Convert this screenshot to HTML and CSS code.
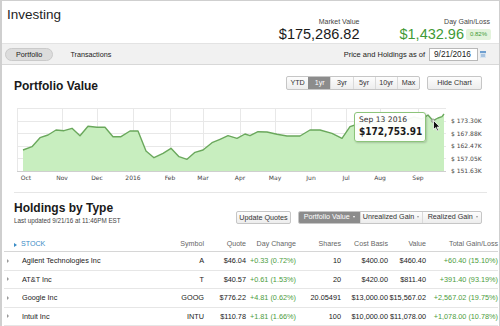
FILE: index.html
```html
<!DOCTYPE html>
<html lang="en">
<head>
<meta charset="utf-8">
<title>Investing</title>
<link rel="stylesheet" href="styles.css">
</head>
<body>
<div class="frame">
  <header class="top">
    <h1 class="title">Investing</h1>
    <div class="stats">
      <div class="stat">
        <div class="stat-label">Market Value</div>
        <div class="stat-value">$175,286.82</div>
      </div>
      <div class="stat">
        <div class="stat-label">Day Gain/Loss</div>
        <div class="stat-row"><span class="stat-value gain">$1,432.96</span><span class="badge">0.82%</span></div>
      </div>
    </div>
  </header>

  <nav class="tabs">
    <div class="tab-list"><span class="tab active">Portfolio</span><span class="tab">Transactions</span></div>
    <div class="asof">
      <span class="asof-label">Price and Holdings as of</span>
      <span class="date-box">9/21/2016</span>
      <svg class="cal" width="6" height="7" viewBox="0 0 6 7"><rect x="0" y="0" width="6" height="7" fill="#d8e4f0"/><rect x="0" y="0" width="6" height="2" fill="#6f9fd0"/><rect x="1" y="3" width="4" height="3" fill="#a9c4e0"/></svg>
    </div>
  </nav>

  <div class="pv-head">
    <h2 class="section-title pv-title">Portfolio Value</h2>
    <div class="controls">
      <div class="seg">
        <button class="seg-btn">YTD</button><button class="seg-btn on">1yr</button><button class="seg-btn">3yr</button><button class="seg-btn">5yr</button><button class="seg-btn">10yr</button><button class="seg-btn">Max</button>
      </div>
      <button class="btn hide-btn">Hide Chart</button>
    </div>
  </div>

  <div class="chart">
    <svg class="plot" width="496" height="86" viewBox="2 100 496 86">
      <g class="grid">
        <line x1="17" y1="108.5" x2="446" y2="108.5"/>
        <line x1="17" y1="121" x2="446" y2="121"/>
        <line x1="17" y1="133.5" x2="446" y2="133.5"/>
        <line x1="17" y1="146" x2="446" y2="146"/>
        <line x1="17" y1="158.5" x2="446" y2="158.5"/>
        <line x1="17.5" y1="108" x2="17.5" y2="171"/>
        <line x1="62.5" y1="108" x2="62.5" y2="171"/>
        <line x1="97.5" y1="108" x2="97.5" y2="171"/>
        <line x1="133.5" y1="108" x2="133.5" y2="171"/>
        <line x1="170.5" y1="108" x2="170.5" y2="171"/>
        <line x1="203.5" y1="108" x2="203.5" y2="171"/>
        <line x1="240.5" y1="108" x2="240.5" y2="171"/>
        <line x1="275.5" y1="108" x2="275.5" y2="171"/>
        <line x1="311.5" y1="108" x2="311.5" y2="171"/>
        <line x1="346.5" y1="108" x2="346.5" y2="171"/>
        <line x1="380.5" y1="108" x2="380.5" y2="171"/>
        <line x1="418.5" y1="108" x2="418.5" y2="171"/>
      </g>
      <path class="area" d="M23,150 L32,146.7 L40,137.7 L48,135 L56,130 L64,130.7 L72,128.3 L80,135.7 L88,126.3 L97,127.3 L105,127.3 L113,136.7 L121,136.7 L130,131 L138,131 L146,151 L154,157.7 L163,153.3 L171,148.3 L179,156.7 L187,159.3 L195,152.3 L203,150 L212,142.7 L220,139.3 L228,135.7 L237,138.3 L245,134 L250,135.7 L258,131.7 L267,132 L277,134.3 L287,136 L300,136 L310,130 L320,130 L332,133.3 L342,138.3 L350,126.7 L358,124 L366,121 L374,123 L382,119 L390,121 L398,118 L406,120 L414,117 L422,119 L428,115 L433,120.7 L438,118 L442,116.7 L444,114 L444,171 L23,171 Z"/>
      <path class="line" d="M23,150 L32,146.7 L40,137.7 L48,135 L56,130 L64,130.7 L72,128.3 L80,135.7 L88,126.3 L97,127.3 L105,127.3 L113,136.7 L121,136.7 L130,131 L138,131 L146,151 L154,157.7 L163,153.3 L171,148.3 L179,156.7 L187,159.3 L195,152.3 L203,150 L212,142.7 L220,139.3 L228,135.7 L237,138.3 L245,134 L250,135.7 L258,131.7 L267,132 L277,134.3 L287,136 L300,136 L310,130 L320,130 L332,133.3 L342,138.3 L350,126.7 L358,124 L366,121 L374,123 L382,119 L390,121 L398,118 L406,120 L414,117 L422,119 L428,115 L433,120.7 L438,118 L442,116.7 L444,114"/>
      <line class="axis" x1="17" y1="171.5" x2="446" y2="171.5"/>
      <circle class="marker" cx="433" cy="120.7" r="1.8"/>
      <g class="xl">
        <text x="26" y="179.5">Oct</text>
        <text x="62" y="179.5">Nov</text>
        <text x="97" y="179.5">Dec</text>
        <text x="133" y="179.5">2016</text>
        <text x="170" y="179.5">Feb</text>
        <text x="203" y="179.5">Mar</text>
        <text x="240" y="179.5">Apr</text>
        <text x="275" y="179.5">May</text>
        <text x="311" y="179.5">Jun</text>
        <text x="346" y="179.5">Jul</text>
        <text x="380" y="179.5">Aug</text>
        <text x="418" y="179.5">Sep</text>
      </g>
      <g class="yl">
        <text x="451" y="123">$ 173.30K</text>
        <text x="451" y="135.5">$ 167.88K</text>
        <text x="451" y="148">$ 162.47K</text>
        <text x="451" y="160.5">$ 157.05K</text>
        <text x="451" y="173">$ 151.63K</text>
      </g>
    </svg>
    <div class="tooltip">
      <div class="tt-date">Sep 13 2016</div>
      <div class="tt-value">$172,753.91</div>
    </div>
    <svg class="cursor" width="8" height="12" viewBox="0 0 8 12"><path d="M0.5,0.5 L0.5,9.5 L2.6,7.6 L4.1,10.9 L5.5,10.3 L4,7.1 L6.9,7 Z" fill="#111" stroke="#fff" stroke-width="0.8"/></svg>
  </div>

  <div class="holdings-head">
    <div class="hh-left">
      <h2 class="section-title">Holdings by Type</h2>
      <div class="updated">Last updated 9/21/16 at 11:46PM EST</div>
    </div>
    <div class="hh-right">
      <button class="btn update-btn">Update Quotes</button>
      <div class="seg dd">
        <button class="seg-btn on dd1">Portfolio Value<i class="caret"></i></button><button class="seg-btn dd2">Unrealized Gain<i class="caret"></i></button><button class="seg-btn dd3">Realized Gain<i class="caret"></i></button>
      </div>
    </div>
  </div>

  <div class="table">
    <div class="tr th">
      <div class="c name stock"><i class="tri blue"></i>STOCK</div>
      <div class="c">Symbol</div>
      <div class="c">Quote</div>
      <div class="c">Day Change</div>
      <div class="c">Shares</div>
      <div class="c">Cost Basis</div>
      <div class="c">Value</div>
      <div class="c">Total Gain/Loss</div>
    </div>
    <div class="tr">
      <div class="c name"><i class="tri"></i>Agilent Technologies Inc</div>
      <div class="c">A</div>
      <div class="c">$46.04</div>
      <div class="c pos">+0.33 (0.72%)</div>
      <div class="c">10</div>
      <div class="c">$400.00</div>
      <div class="c">$460.40</div>
      <div class="c pos">+60.40 (15.10%)</div>
    </div>
    <div class="tr">
      <div class="c name"><i class="tri"></i>AT&amp;T Inc</div>
      <div class="c">T</div>
      <div class="c">$40.57</div>
      <div class="c pos">+0.61 (1.53%)</div>
      <div class="c">20</div>
      <div class="c">$420.00</div>
      <div class="c">$811.40</div>
      <div class="c pos">+391.40 (93.19%)</div>
    </div>
    <div class="tr">
      <div class="c name"><i class="tri"></i>Google Inc</div>
      <div class="c">GOOG</div>
      <div class="c">$776.22</div>
      <div class="c pos">+4.81 (0.62%)</div>
      <div class="c">20.05491</div>
      <div class="c">$13,000.00</div>
      <div class="c">$15,567.02</div>
      <div class="c pos">+2,567.02 (19.75%)</div>
    </div>
    <div class="tr">
      <div class="c name"><i class="tri"></i>Intuit Inc</div>
      <div class="c">INTU</div>
      <div class="c">$110.78</div>
      <div class="c pos">+1.81 (1.66%)</div>
      <div class="c">100</div>
      <div class="c">$10,000.00</div>
      <div class="c">$11,078.00</div>
      <div class="c pos">+1,078.00 (10.78%)</div>
    </div>
  </div>
</div>
</body>
</html>
```

FILE: styles.css
```css
* {
  box-sizing: border-box;
  margin: 0;
  padding: 0;
}

html, body {
  width: 500px;
  height: 326px;
  overflow: hidden;
  background: #fff;
}

body {
  font-family: "Liberation Sans", Arial, sans-serif;
  color: #222;
}

button {
  font: inherit;
  color: inherit;
  background: none;
  border: 0;
  cursor: default;
}

.frame {
  height: 326px;
  border: 1px solid #cfcfcf;
  border-left-width: 2px;
  border-bottom: 0;
}

/* header */
.top {
  display: flex;
  justify-content: space-between;
  align-items: flex-start;
  height: 42px;
  padding: 6px 9px 0 5px;
}

.title {
  font-size: 13.5px;
  font-weight: normal;
  line-height: 16px;
  color: #1e1e1e;
}

.stats {
  display: flex;
  gap: 40px;
  padding-top: 10px;
}

.stat {
  display: flex;
  flex-direction: column;
  align-items: flex-end;
}

.stat-label {
  font-size: 7px;
  line-height: 9px;
  color: #444;
}

.stat-value {
  font-size: 14.5px;
  line-height: 16px;
  color: #1a1a1a;
}

.stat-row {
  display: flex;
  align-items: center;
  gap: 2px;
}

.gain {
  color: #3f9a36;
}

.badge {
  font-size: 6px;
  line-height: 7px;
  padding: 2px 4px;
  background: #e3f3dc;
  color: #3f9a36;
  border-radius: 2px;
  margin-right: -1px;
}

/* tabs bar */
.tabs {
  display: flex;
  justify-content: space-between;
  align-items: center;
  height: 22px;
  background: #f1f1f1;
  border-top: 1px solid #e3e3e3;
  border-bottom: 1px solid #d8d8d8;
  padding: 0 13px 0 3px;
}

.tab-list {
  display: flex;
  gap: 6px;
}

.tab {
  font-size: 7.2px;
  line-height: 11px;
  height: 13px;
  padding: 0 10px;
  border: 1px solid transparent;
  border-radius: 7px;
  color: #222;
}

.tab.active {
  background: #dcdcdc;
  border-color: #cacaca;
}

.asof {
  display: flex;
  align-items: center;
}

.asof-label {
  font-size: 7.5px;
  color: #222;
  margin-right: 4px;
}

.date-box {
  width: 49px;
  height: 13px;
  border: 1px solid #b8b8b8;
  background: #fff;
  font-size: 8.3px;
  line-height: 11px;
  padding-left: 4px;
  color: #222;
}

.cal {
  display: block;
  margin-left: 2px;
}

/* portfolio value */
.pv-head {
  display: flex;
  justify-content: space-between;
  align-items: flex-start;
  height: 14px;
  margin-top: 11px;
  padding: 0 17px 0 12px;
}

.section-title {
  font-size: 12px;
  font-weight: bold;
  line-height: 14px;
  color: #1a1a1a;
}

.pv-title {
  margin-top: 2.5px;
}

.controls {
  display: flex;
  gap: 7px;
}

.seg {
  display: flex;
  height: 14px;
  border: 1px solid #c6c6c6;
  border-radius: 2px;
  background: linear-gradient(#fdfdfd, #ededed);
  overflow: hidden;
}

.pv-head .seg {
  width: 134px;
}

.seg-btn {
  flex: 1;
  font-size: 7.2px;
  line-height: 12px;
  color: #333;
  border-left: 1px solid #dadada;
  white-space: nowrap;
}

.seg-btn:first-child {
  border-left: 0;
}

.seg-btn.on {
  background: #8c8c8c;
  color: #fff;
  border-left-color: #8c8c8c;
}

.btn {
  height: 14px;
  border: 1px solid #c6c6c6;
  border-radius: 2px;
  background: linear-gradient(#fdfdfd, #ededed);
  font-size: 7.2px;
  line-height: 12px;
  color: #333;
  white-space: nowrap;
}

.hide-btn {
  width: 55px;
}

/* chart */
.chart {
  position: relative;
  height: 86px;
  margin-top: 10px;
}

.plot {
  display: block;
}

.grid line {
  stroke: #e8e8e8;
  stroke-width: 1;
  shape-rendering: crispEdges;
}

.axis {
  stroke: #cfcfcf;
  stroke-width: 1;
  shape-rendering: crispEdges;
}

.area {
  fill: #c8eebf;
}

.line {
  fill: none;
  stroke: #6aa85c;
  stroke-width: 1.4;
  stroke-linejoin: round;
}

.marker {
  fill: #b9c9b4;
  stroke: #888;
  stroke-width: 0.6;
}

.xl text {
  font-family: "DejaVu Sans", Verdana, sans-serif;
  font-size: 6px;
  fill: #444;
  text-anchor: middle;
}

.yl text {
  font-family: "DejaVu Sans", Verdana, sans-serif;
  font-size: 6px;
  fill: #444;
}

.tooltip {
  position: absolute;
  left: 352px;
  top: 12px;
  width: 72px;
  height: 30px;
  padding: 2.4px 0 0 4px;
  background: rgba(255, 255, 255, 0.94);
  border: 1px solid #8cc47a;
  border-radius: 3px;
  box-shadow: 1px 1px 2px rgba(0, 0, 0, 0.18);
  font-family: "DejaVu Sans", Verdana, sans-serif;
}

.tt-date {
  font-size: 7.6px;
  line-height: 9px;
  color: #333;
}

.tt-value {
  font-size: 10px;
  line-height: 12px;
  font-weight: bold;
  font-stretch: condensed;
  color: #1a1a1a;
  margin-top: 1.5px;
}

.cursor {
  position: absolute;
  left: 431px;
  top: 20px;
}

/* holdings */
.holdings-head {
  display: flex;
  justify-content: space-between;
  align-items: flex-start;
  height: 46px;
  margin: 6px 12px 0 12px;
  border-top: 1px solid #e6e6e6;
  padding: 8px 5px 0 0;
}

.updated {
  font-size: 6.3px;
  line-height: 8px;
  color: #444;
  margin-top: 2px;
}

.hh-right {
  display: flex;
  gap: 7px;
  margin-top: 9.7px;
}

.update-btn {
  width: 55px;
  height: 13.5px;
}

.seg.dd {
  height: 13.5px;
  width: 184px;
}

.dd .seg-btn {
  flex: none;
  display: flex;
  align-items: center;
  justify-content: center;
  gap: 2px;
}

.dd1 { width: 60.5px; }
.dd2 { width: 62px; }
.dd3 { width: 61.5px; }

.caret {
  display: block;
  width: 0;
  height: 0;
  border-top: 2.5px solid #999;
  border-left: 1.8px solid transparent;
  border-right: 1.8px solid transparent;
  margin-left: 1px;
}

.seg-btn.on .caret {
  border-top-color: #fff;
}

/* table */
.table {
  margin: 0 1px 0 2px;
  font-size: 7.3px;
}

.tr {
  display: grid;
  grid-template-columns: 166px 34px 42px 50px 45px 47px 38px 72px;
  align-items: center;
  height: 18.5px;
  border-bottom: 1px solid #e6e6e6;
  color: #222;
}

.tr:last-child {
  height: 18px;
}

.tr.th {
  height: 14px;
  align-items: end;
  padding-bottom: 2px;
  border-bottom: 1px solid #d6d6d6;
  color: #666;
  font-size: 7.1px;
  line-height: 9px;
}

.c {
  text-align: right;
  white-space: nowrap;
}

.c.name {
  text-align: left;
  display: flex;
  align-items: center;
  padding-left: 3px;
}

.c.stock {
  padding-left: 10px;
  color: #3a8cc6;
}

.tri {
  display: block;
  width: 0;
  height: 0;
  border-left: 2.5px solid #999;
  border-top: 2px solid transparent;
  border-bottom: 2px solid transparent;
  margin-right: 13px;
}

.tri.blue {
  border-left-color: #3a8cc6;
  border-left-width: 3px;
  border-top-width: 2.5px;
  border-bottom-width: 2.5px;
  margin-right: 4px;
}

.pos {
  color: #4c9c3c;
}
```
